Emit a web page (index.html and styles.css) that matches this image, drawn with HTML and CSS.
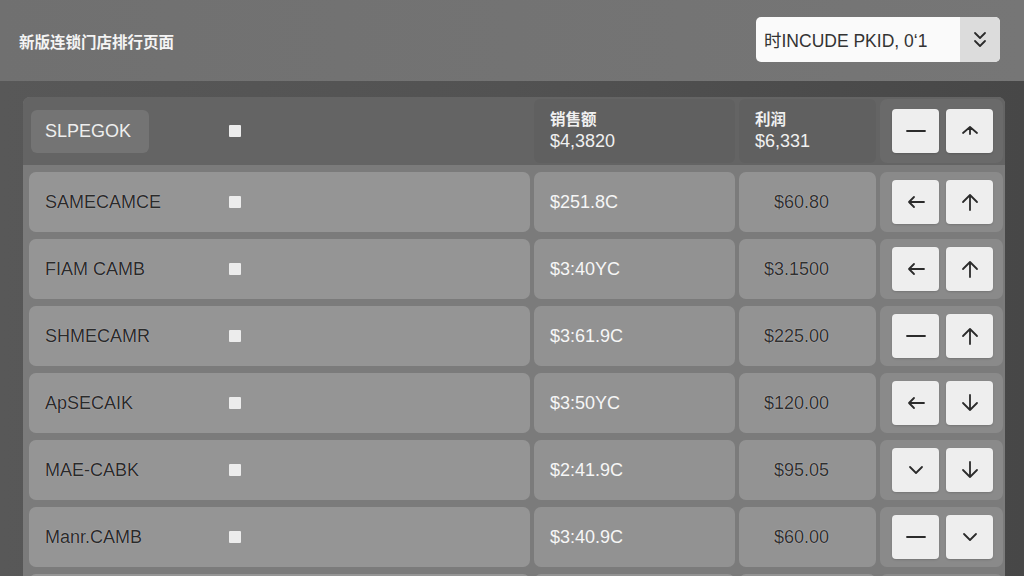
FILE: index.html
```html
<!DOCTYPE html>
<html lang="zh-CN">
<head>
  <meta charset="UTF-8">
  <meta name="viewport" content="width=device-width, initial-scale=1.0">
  <title>新版连锁门店排行页面</title>
  <link rel="stylesheet" href="styles.css">
</head>
<body>

  <!-- icon set used by the row buttons -->
  <svg class="icon-defs" width="0" height="0">
    <symbol id="i-minus" viewBox="0 0 24 24"><path d="M3 12h18"/></symbol>
    <symbol id="i-caret" viewBox="0 0 24 24"><path d="M12 8v7M5 14l7-6 7 6"/></symbol>
    <symbol id="i-up" viewBox="0 0 24 24"><path d="M12 20V5M5 12l7-7 7 7"/></symbol>
    <symbol id="i-down" viewBox="0 0 24 24"><path d="M12 4v15M5 12l7 7 7-7"/></symbol>
    <symbol id="i-left" viewBox="0 0 24 24"><path d="M20 12H5M10 7l-5 5 5 5"/></symbol>
    <symbol id="i-chev" viewBox="0 0 24 24"><path d="M6 9l6 6 6-6"/></symbol>
    <symbol id="i-dchev" viewBox="0 0 24 24"><path d="M7 5l5 5 5-5M7 13l5 5 5-5"/></symbol>
  </svg>

  <header class="topbar">
    <h1 class="title">新版连锁门店排行页面</h1>
    <div class="picker">
      <span class="picker-text">时INCUDE PKID, 0‘1</span>
      <span class="picker-btn"><svg class="ico"><use href="#i-dchev"/></svg></span>
    </div>
  </header>

  <main class="board">
    <div class="head-row">
      <div class="head-name">
        <span class="badge">SLPEGOK</span>
        <span class="check"></span>
      </div>
      <div class="head-cell">
        <span class="head-label">销售额</span>
        <span class="head-value">$4,3820</span>
      </div>
      <div class="head-cell">
        <span class="head-label">利润</span>
        <span class="head-value">$6,331</span>
      </div>
      <div class="head-actions">
        <button class="btn"><svg class="ico"><use href="#i-minus"/></svg></button>
        <button class="btn"><svg class="ico"><use href="#i-caret"/></svg></button>
      </div>
    </div>

    <div class="row">
      <div class="name-cell"><span class="name">SAMECAMCE</span><span class="check"></span></div>
      <div class="sales">$251.8C</div>
      <div class="profit">$60.80</div>
      <div class="actions">
        <button class="btn"><svg class="ico"><use href="#i-left"/></svg></button>
        <button class="btn"><svg class="ico"><use href="#i-up"/></svg></button>
      </div>
    </div>

    <div class="row">
      <div class="name-cell"><span class="name">FIAM CAMB</span><span class="check"></span></div>
      <div class="sales">$3:40YC</div>
      <div class="profit">$3.1500</div>
      <div class="actions">
        <button class="btn"><svg class="ico"><use href="#i-left"/></svg></button>
        <button class="btn"><svg class="ico"><use href="#i-up"/></svg></button>
      </div>
    </div>

    <div class="row">
      <div class="name-cell"><span class="name">SHMECAMR</span><span class="check"></span></div>
      <div class="sales">$3:61.9C</div>
      <div class="profit">$225.00</div>
      <div class="actions">
        <button class="btn"><svg class="ico"><use href="#i-minus"/></svg></button>
        <button class="btn"><svg class="ico"><use href="#i-up"/></svg></button>
      </div>
    </div>

    <div class="row">
      <div class="name-cell"><span class="name">ApSECAIK</span><span class="check"></span></div>
      <div class="sales">$3:50YC</div>
      <div class="profit">$120.00</div>
      <div class="actions">
        <button class="btn"><svg class="ico"><use href="#i-left"/></svg></button>
        <button class="btn"><svg class="ico"><use href="#i-down"/></svg></button>
      </div>
    </div>

    <div class="row">
      <div class="name-cell"><span class="name">MAE-CABK</span><span class="check"></span></div>
      <div class="sales">$2:41.9C</div>
      <div class="profit">$95.05</div>
      <div class="actions">
        <button class="btn"><svg class="ico"><use href="#i-chev"/></svg></button>
        <button class="btn"><svg class="ico"><use href="#i-down"/></svg></button>
      </div>
    </div>

    <div class="row">
      <div class="name-cell"><span class="name">Manr.CAMB</span><span class="check"></span></div>
      <div class="sales">$3:40.9C</div>
      <div class="profit">$60.00</div>
      <div class="actions">
        <button class="btn"><svg class="ico"><use href="#i-minus"/></svg></button>
        <button class="btn"><svg class="ico"><use href="#i-chev"/></svg></button>
      </div>
    </div>

    <!-- next row, scrolled below the fold -->
    <div class="row">
      <div class="name-cell"></div>
      <div class="sales"></div>
      <div class="profit"></div>
      <div class="actions"></div>
    </div>
  </main>

</body>
</html>
```

FILE: styles.css
```css
html, body {
  height: 100%;
}

body {
  margin: 0;
  overflow: hidden;
  font-family: "Liberation Sans", "Noto Sans CJK SC", sans-serif;
  background: linear-gradient(90deg, #585858 0%, #525252 50%, #474747 100%);
}

.icon-defs {
  position: absolute;
}

.ico {
  width: 24px;
  height: 24px;
  fill: none;
  stroke: #2b2b2b;
  stroke-width: 1.8;
  stroke-linecap: round;
  stroke-linejoin: round;
}

/* top bar */
.topbar {
  height: 81px;
  display: flex;
  align-items: center;
  justify-content: space-between;
  padding: 0 24px 0 19px;
  background: linear-gradient(90deg, #707070, #767676);
  box-sizing: border-box;
}

.title {
  margin: 0;
  font-family: "Noto Sans CJK SC", sans-serif;
  font-size: 15.5px;
  font-weight: 700;
  color: #f4f4f4;
}

.picker {
  width: 244px;
  height: 45px;
  margin-top: -2px;
  display: flex;
  background: #fafafa;
  border-radius: 5px;
  overflow: hidden;
}

.picker-text {
  flex: 1;
  display: flex;
  align-items: center;
  padding-left: 8px;
  font-size: 17.5px;
  color: #333;
}

.picker-btn {
  width: 40px;
  display: flex;
  align-items: center;
  justify-content: center;
  background: #dcdcdc;
}

/* table */
.board {
  margin: 16px 19px 0 23px;
  background: #7b7b7b;
  border-radius: 7px 7px 0 0;
  padding: 0 2px 0 6px;
}

.head-row,
.row {
  display: grid;
  grid-template-columns: 501px 201px 137px 123px;
  column-gap: 4px;
}

.head-row {
  height: 68px;
  margin: 0 -2px 0 -6px;
  padding: 0 2px 0 6px;
  background: #646464;
  border-radius: 7px 7px 0 0;
}

.head-name {
  display: flex;
  align-items: center;
  padding-left: 2px;
}

.badge {
  width: 118px;
  height: 43px;
  box-sizing: border-box;
  padding-left: 14px;
  display: flex;
  align-items: center;
  background: #747474;
  border-radius: 6px;
  color: #eeeeee;
  font-size: 18px;
}

.head-name .check {
  margin-left: 80px;
}

.head-cell {
  display: flex;
  flex-direction: column;
  justify-content: center;
  padding-left: 16px;
  background: #606060;
  border-radius: 6px;
  margin: 2px 0;
  color: #f0f0f0;
}

.head-label {
  font-family: "Noto Sans CJK SC", sans-serif;
  font-size: 15.5px;
  font-weight: 700;
  line-height: 22px;
  margin-top: -2px;
}

.head-value {
  font-size: 18px;
  line-height: 24px;
}

.head-actions {
  display: flex;
  align-items: center;
  gap: 7px;
  padding-left: 12px;
  background: #6a6a6a;
  border-radius: 7px;
  margin: 2px 0;
}

.row {
  height: 60px;
  margin-top: 7px;
}

.name-cell,
.sales,
.profit {
  display: flex;
  align-items: center;
  background: #959595;
  border-radius: 7px;
  font-size: 18px;
}

.name-cell {
  padding-left: 16px;
}

.name {
  width: 184px;
  color: #2a2a2a;
  text-shadow: 0 0 1px rgba(255, 255, 255, 0.6);
}

.check {
  width: 12px;
  height: 12px;
  background: #ececec;
  border-radius: 1px;
}

.sales {
  padding-left: 16px;
  color: #f6f6f6;
  background: #929292;
}

.profit {
  justify-content: flex-end;
  padding-right: 47px;
  color: #303030;
  text-shadow: 0 0 1px rgba(255, 255, 255, 0.7);
  background: #939393;
}

.actions {
  display: flex;
  align-items: center;
  gap: 7px;
  padding-left: 12px;
  background: #8a8a8a;
  border-radius: 7px;
}

.btn {
  width: 47px;
  height: 44px;
  padding: 0;
  border: none;
  border-radius: 4px;
  background: #eeeeee;
  display: flex;
  align-items: center;
  justify-content: center;
  box-shadow: 0 1px 2px rgba(0, 0, 0, 0.15);
}
```
